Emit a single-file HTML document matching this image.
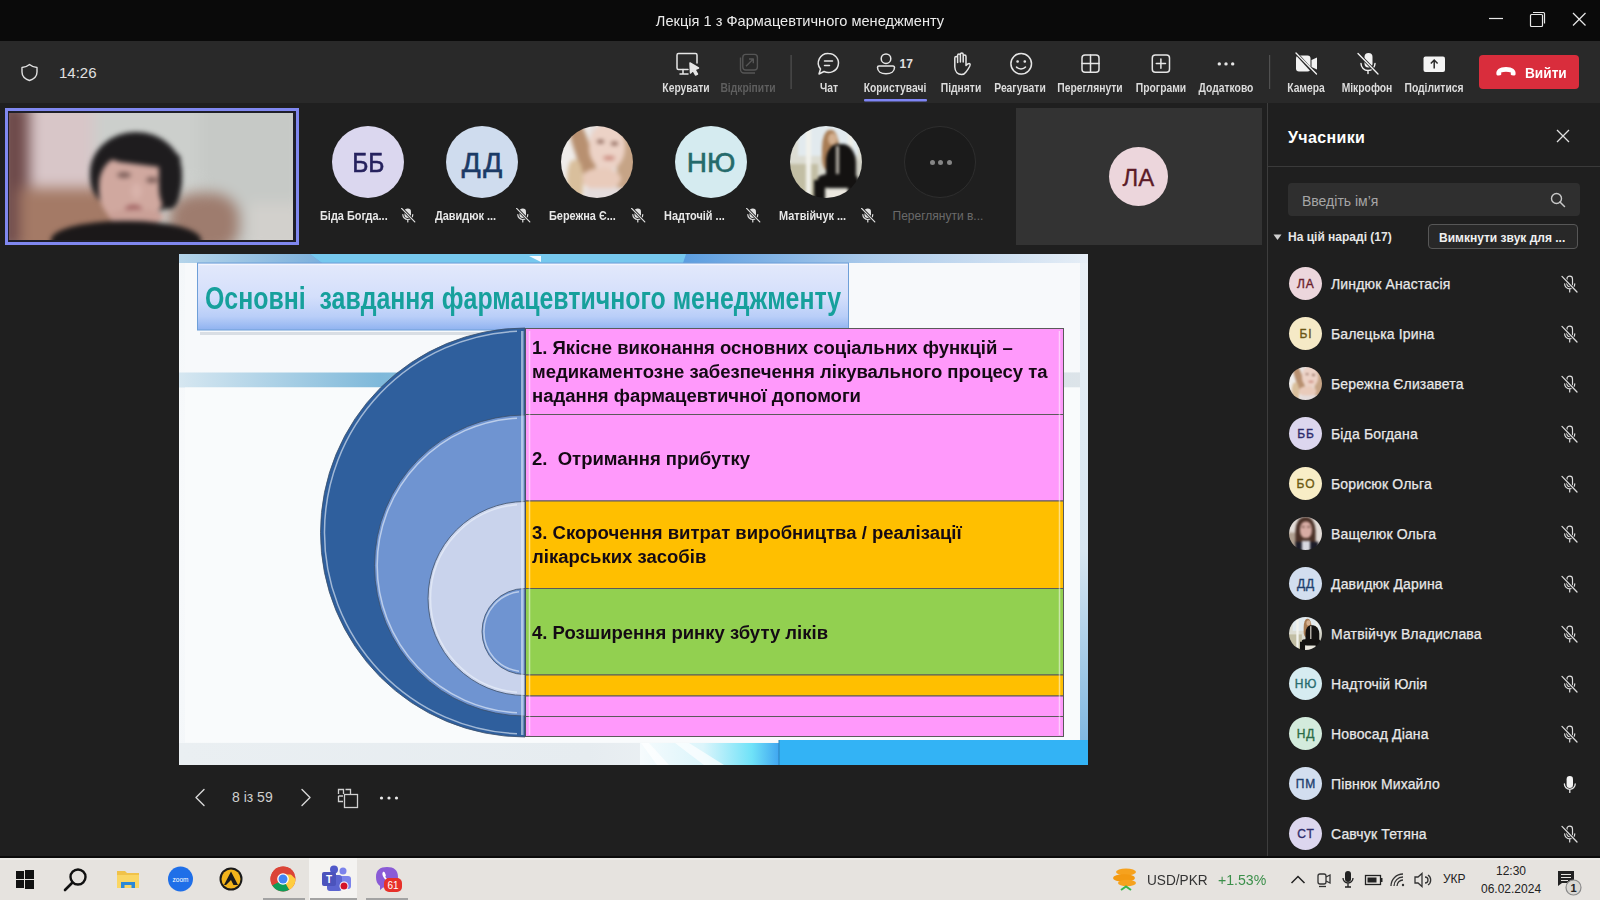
<!DOCTYPE html>
<html><head><meta charset="utf-8">
<style>
*{margin:0;padding:0;box-sizing:border-box}
html,body{width:1600px;height:900px;overflow:hidden;background:#1f1f1f;font-family:"Liberation Sans",sans-serif}
.a{position:absolute}
#title{left:0;top:0;width:1600px;height:41px;background:#0a0a0a}
#ttl{left:0;width:1600px;top:12px;text-align:center;color:#ececec;font-size:15px;transform:scaleX(0.973)}
#tb{left:0;top:41px;width:1600px;height:62px;background:#292929}
.lbl{color:#dcdcdc;font-size:12px;font-weight:bold;top:81px;text-align:center;white-space:nowrap;transform:scaleX(0.86)}
.dis{color:#5e5e5e}
.sep{background:#4a4a4a;width:1px}
svg{position:absolute;overflow:visible}
#slide{left:179px;top:254px;width:909px;height:511px;background:#f4f7fa;overflow:hidden}
#panel{left:1267px;top:103px;width:333px;height:755px;background:#1f1f1f;border-left:1px solid #3d3d3d}
.av{border-radius:50%;display:flex;align-items:center;justify-content:center;font-size:28px;font-weight:normal;-webkit-text-stroke:0.6px currentColor}
.nm{color:#e8e8e8;font-size:12px;font-weight:bold;white-space:nowrap;transform:scaleX(0.91);transform-origin:0 0}
.rt{color:#140a14;font-size:18px;font-weight:bold;line-height:24px;white-space:nowrap;transform-origin:0 0;transform:scaleX(1.028)}
.pav{width:33px;height:33px;font-size:12px;letter-spacing:0.9px;text-indent:0.9px;-webkit-text-stroke:0.35px currentColor}
.pn{color:#e8e8e8;font-size:14px;white-space:nowrap;letter-spacing:0.15px;margin-top:1.5px;-webkit-text-stroke:0.25px #e8e8e8}
#taskbar{left:0;top:858px;width:1600px;height:42px;background:#e6e3df}
</style></head><body>
<svg width="0" height="0" style="position:absolute">
 <symbol id="pmute" viewBox="0 0 18 18">
  <g fill="none" stroke="#dcdcdc" stroke-width="1.2" stroke-linecap="round">
   <rect x="5.9" y="1.2" width="5.6" height="10.4" rx="2.8"/>
   <path d="M3.6 8.8 A5.1 5.1 0 0 0 13.8 8.8 M8.7 13.9 V17"/>
  </g>
  <path d="M0.8 1.2 L16.2 17.2" stroke="#1f1f1f" stroke-width="3"/>
  <path d="M1 1.4 L16 17" stroke="#dcdcdc" stroke-width="1.3" stroke-linecap="round"/>
 </symbol>
 <symbol id="pmic" viewBox="0 0 18 18">
  <rect x="5.6" y="1" width="6.4" height="12" rx="3.2" fill="#f4f4f4"/>
  <path d="M3.4 9 A5.4 5.4 0 0 0 14.2 9 M8.8 14.6 V17.5" fill="none" stroke="#e8e8e8" stroke-width="1.3" stroke-linecap="round"/>
 </symbol>
 <symbol id="smute" viewBox="0 0 15 15">
  <rect x="3.5" y="0.5" width="6.5" height="9.5" rx="3.2" fill="#e0e0e0"/>
  <path d="M1.8 6.5 A5 5 0 0 0 11.8 6.5 M6.8 11.5 V14" fill="none" stroke="#e0e0e0" stroke-width="1.2" stroke-linecap="round"/>
  <path d="M0.3 0 L14 14" stroke="#1f1f1f" stroke-width="2.8"/>
  <path d="M0.6 0.4 L13.8 13.9" stroke="#e0e0e0" stroke-width="1.2" stroke-linecap="round"/>
 </symbol>
</svg>
<div id="title" class="a"></div>
<div id="ttl" class="a">Лекція 1 з Фармацевтичного менеджменту</div>
<div id="tb" class="a"></div>
<!-- window controls -->
<svg style="left:0;top:0" width="1600" height="41">
 <g stroke="#e8e8e8" stroke-width="1.2" fill="none">
  <line x1="1489" y1="18.5" x2="1503" y2="18.5"/>
  <rect x="1530.5" y="14.5" width="12" height="12" rx="1"/>
  <path d="M1533 12.5 H1543.5 a1 1 0 0 1 1 1 V23.5"/>
  <line x1="1573" y1="13" x2="1585.5" y2="25.5"/>
  <line x1="1585.5" y1="13" x2="1573" y2="25.5"/>
 </g>
</svg>
<!-- left toolbar -->
<svg style="left:0;top:41px" width="1600" height="62">
 <g stroke="#e0e0e0" stroke-width="1.4" fill="none" stroke-linejoin="round" stroke-linecap="round">
  <!-- shield -->
  <path d="M29.5 23.5 C26.5 26 24 26.5 22 26.5 V31 C22 35.5 25 38 29.5 39.5 C34 38 37 35.5 37 31 V26.5 C35 26.5 32.5 26 29.5 23.5 Z"/>
 </g>
 <g stroke="#e6e6e6" stroke-width="1.5" fill="none" stroke-linejoin="round" stroke-linecap="round">
  <!-- Керувати: monitor + cursor -->
  <path d="M688 28.5 H678.5 a1.5 1.5 0 0 1 -1.5 -1.5 V14 a1.5 1.5 0 0 1 1.5 -1.5 H695.5 a1.5 1.5 0 0 1 1.5 1.5 V22"/>
  <path d="M683 28.5 V32.5 M680 33 H688"/>
  <path d="M690 22 L698.5 27 L695 28.5 L697.5 33 L695.5 34 L693 29.5 L690.5 32 Z" fill="#e6e6e6"/>
  <!-- Чат -->
  <path d="M828.5 12.5 a10 9.5 0 1 1 -4.5 18 L819 33 L820.5 28 a9.5 9.5 0 0 1 8 -15.5 Z"/>
  <path d="M824.5 20 H832.5 M824.5 24.5 H829.5"/>
  <!-- person -->
  <circle cx="886" cy="17.7" r="4.8"/>
  <path d="M877.5 26.5 a1.5 1.5 0 0 1 1.5 -1.5 H893 a1.5 1.5 0 0 1 1.5 1.5 C894.5 30.5 891 32.8 886 32.8 C881 32.8 877.5 30.5 877.5 26.5 Z"/>
  <!-- hand -->
  <path transform="translate(1.5,0)" d="M964.5 31 C967.5 27 969.5 24.5 968.5 23 C967.5 22 966 23 964.5 24.5 V15.5 a1.4 1.4 0 0 0 -2.8 0 V21 V13.5 a1.4 1.4 0 0 0 -2.8 0 V21 V14.5 a1.4 1.4 0 0 0 -2.8 0 V21.5 V17 a1.4 1.4 0 0 0 -2.8 0 V26 C953.5 31 956.5 33.5 960 33.5 C962 33.5 963.5 32.5 964.5 31 Z"/>
  <!-- smiley -->
  <circle cx="1021.2" cy="22.7" r="10.3"/>
  <path d="M1016.5 26 C1018.5 28.5 1023.5 28.5 1025.5 26"/>
  <circle cx="1017.6" cy="20.5" r="0.6" fill="#e6e6e6"/><circle cx="1024.8" cy="20.5" r="0.6" fill="#e6e6e6"/>
  <!-- grid -->
  <rect x="1082" y="14" width="17" height="17.2" rx="3"/>
  <path d="M1090.5 14 V31.2 M1082 22.6 H1099"/>
  <!-- apps plus -->
  <rect x="1152.3" y="14" width="17.2" height="17.2" rx="3"/>
  <path d="M1160.9 18 V27.2 M1156.3 22.6 H1165.5"/>
 </g>
 <g fill="#e6e6e6">
  <circle cx="1219.3" cy="22.9" r="1.7"/><circle cx="1226" cy="22.9" r="1.7"/><circle cx="1232.7" cy="22.9" r="1.7"/>
 </g>
 <!-- unpin disabled -->
 <g stroke="#555" stroke-width="1.4" fill="none" stroke-linejoin="round">
  <rect x="742.8" y="13.4" width="14.6" height="15.6" rx="3"/>
  <path d="M740.5 16.5 V28.5 a3.5 3.5 0 0 0 3.5 3.5 H755"/>
  <path d="M746 25.3 L753.3 18 M749 18 H753.3 V22.3"/>
 </g>
 <!-- separators -->
 <rect x="790.5" y="14" width="1.2" height="34" fill="#505050"/>
 <rect x="1269" y="14" width="1.2" height="34" fill="#505050"/>
 <!-- underline -->
 <rect x="864" y="58" width="63" height="2.5" rx="1" fill="#7f85f5"/>
 <!-- camera off -->
 <rect x="1296" y="14.5" width="14.5" height="16" rx="3" fill="#f2f2f2"/>
 <path d="M1311.5 19 L1317 16.5 V28.5 L1311.5 26 Z" fill="#f2f2f2"/>
 <path d="M1295 11 L1316 34" stroke="#292929" stroke-width="3.2"/>
 <path d="M1296 12 L1316.5 33" stroke="#f2f2f2" stroke-width="1.3" stroke-linecap="round"/>
 <!-- mic off -->
 <rect x="1364.5" y="12" width="8" height="14.5" rx="4" fill="#f2f2f2"/>
 <path d="M1361 22.5 a7 7 0 0 0 14 0 M1368 29.5 V32.5" stroke="#f2f2f2" stroke-width="1.4" fill="none" stroke-linecap="round"/>
 <path d="M1357 11.5 L1379 34" stroke="#292929" stroke-width="3.2"/>
 <path d="M1358 12.5 L1378 33" stroke="#f2f2f2" stroke-width="1.3" stroke-linecap="round"/>
 <!-- share -->
 <rect x="1423.5" y="15.5" width="21.5" height="15.5" rx="2" fill="#f4f4f4"/>
 <path d="M1434.2 27.5 V19.5 M1430.8 22.5 L1434.2 19 L1437.6 22.5" stroke="#292929" stroke-width="1.5" fill="none"/>
 <!-- leave button -->
 <rect x="1479" y="14" width="100" height="34" rx="4" fill="#d92d3c"/>
 <path d="M1496.5 33.5 C1495.5 29 1499.5 26 1506 26 C1512.5 26 1516.5 29 1515.5 33.5 C1515.3 34.3 1514.5 34.6 1513.5 34.5 L1511.8 34.3 C1511 34.2 1510.6 33.6 1510.7 32.8 L1510.9 31.6 C1508 30.6 1504 30.6 1501.1 31.6 L1501.3 32.8 C1501.4 33.6 1501 34.2 1500.2 34.3 L1498.5 34.5 C1497.5 34.6 1496.7 34.3 1496.5 33.5 Z" fill="#fff"/>
</svg>
<div class="a" style="left:59px;top:64px;color:#e0e0e0;font-size:15px">14:26</div>
<div class="a" style="left:899.5px;top:56.5px;color:#e0e0e0;font-size:12px;font-weight:bold">17</div>
<div class="a" style="left:1525px;top:64px;color:#fff;font-size:15px;font-weight:bold;transform:scaleX(0.91);transform-origin:0 0">Вийти</div>
<div class="a lbl" style="left:646px;width:80px">Керувати</div>
<div class="a lbl dis" style="left:708px;width:80px">Відкріпити</div>
<div class="a lbl" style="left:789px;width:80px">Чат</div>
<div class="a lbl" style="left:855px;width:80px">Користувачі</div>
<div class="a lbl" style="left:921px;width:80px">Підняти</div>
<div class="a lbl" style="left:980px;width:80px">Реагувати</div>
<div class="a lbl" style="left:1050px;width:80px">Переглянути</div>
<div class="a lbl" style="left:1121px;width:80px">Програми</div>
<div class="a lbl" style="left:1186px;width:80px">Додатково</div>
<div class="a lbl" style="left:1266px;width:80px">Камера</div>
<div class="a lbl" style="left:1327px;width:80px">Мікрофон</div>
<div class="a lbl" style="left:1394px;width:80px">Поділитися</div>

<!-- self video -->
<div class="a" style="left:5px;top:108px;width:294px;height:137px;border:3px solid #8088f0;background:#1f1f2a"></div>
<div class="a" style="left:9px;top:113px;width:284px;height:127px;overflow:hidden;background:#cfd2cf">
 <div class="a" style="left:-10px;top:-10px;width:304px;height:147px;filter:blur(7px)">
  <div class="a" style="left:0;top:0;width:40px;height:147px;background:#6e4a4a"></div>
  <div class="a" style="left:30px;top:0;width:70px;height:90px;background:#d8c6c8"></div>
  <div class="a" style="left:20px;top:85px;width:110px;height:70px;background:#a47a66"></div>
  <div class="a" style="left:95px;top:0;width:110px;height:80px;background:#cccfcc"></div>
  <div class="a" style="left:200px;top:0;width:104px;height:147px;background:#c6c9c6"></div>
  <div class="a" style="left:170px;top:90px;width:70px;height:60px;background:#9e7c6e;border-radius:40%"></div>
  <div class="a" style="left:250px;top:100px;width:60px;height:50px;background:#d2d0cc"></div>
 </div>
 <div class="a" style="left:0;top:0;width:284px;height:127px;filter:blur(2.4px)">
  <div class="a" style="left:81px;top:19px;width:92px;height:82px;border-radius:50% 50% 40% 45%;background:#1e1c1e"></div>
  <div class="a" style="left:90px;top:42px;width:66px;height:70px;border-radius:42% 42% 48% 48%;background:#d0a89f"></div>
  <div class="a" style="left:98px;top:30px;width:74px;height:22px;border-radius:50% 60% 30% 30%;background:#1e1c1e;transform:rotate(7deg)"></div>
  <div class="a" style="left:150px;top:44px;width:22px;height:52px;border-radius:20% 60% 60% 50%;background:#1e1c1e"></div>
  <div class="a" style="left:108px;top:59px;width:14px;height:6px;border-radius:50%;background:#7d5f5a"></div>
  <div class="a" style="left:137px;top:64px;width:12px;height:6px;border-radius:50%;background:#7d5f5a"></div>
  <div class="a" style="left:122px;top:70px;width:11px;height:16px;border-radius:50%;background:#d8b2aa"></div>
  <div class="a" style="left:116px;top:92px;width:17px;height:8px;border-radius:50%;background:#9c5a5c"></div>
  <div class="a" style="left:100px;top:96px;width:55px;height:16px;border-radius:50%;background:#caa097"></div>
  <div class="a" style="left:42px;top:108px;width:150px;height:40px;border-radius:48% 48% 0 0;background:#1b1819"></div>
 </div>
</div>

<!-- avatars -->
<div class="a av" style="left:332px;top:126px;width:72px;height:72px;background:#dbd7ef;color:#26225e"><span style="display:inline-block;transform:scaleX(0.88);margin-top:1px">ББ</span></div>
<div class="a av" style="left:446px;top:126px;width:72px;height:72px;background:#cfdcee;color:#1b3a66"><span style="display:inline-block;letter-spacing:2.5px;margin-left:2.5px;margin-top:1px">ДД</span></div>
<div class="a" style="left:561px;top:126px;width:72px;height:72px;border-radius:50%;overflow:hidden;isolation:isolate"><div class="a" style="left:-6px;top:-6px;width:84px;height:84px;filter:blur(2px)">
<div class="a" style="left:0;top:0;width:84px;height:84px;background:#e6e0de"></div>
<div class="a" style="left:0;top:0;width:34px;height:84px;background:#efecea"></div>
<div class="a" style="left:20px;top:-4px;width:16px;height:70px;background:#b89070;border-radius:40%;transform:rotate(-18deg)"></div>
<div class="a" style="left:62px;top:0;width:22px;height:84px;background:#c6a486"></div>
<div class="a" style="left:34px;top:4px;width:36px;height:46px;border-radius:48%;background:#ecd2c6"></div>
<div class="a" style="left:42px;top:20px;width:7px;height:3px;background:#6a4034;border-radius:50%"></div>
<div class="a" style="left:56px;top:22px;width:7px;height:3px;background:#6a4034;border-radius:50%"></div>
<div class="a" style="left:48px;top:36px;width:12px;height:4px;background:#c88478;border-radius:50%"></div>
<div class="a" style="left:26px;top:48px;width:40px;height:22px;border-radius:50%;background:#e9cbbb"></div>
<div class="a" style="left:12px;top:40px;width:16px;height:44px;background:#d9bf9c;border-radius:40%"></div>
<div class="a" style="left:30px;top:68px;width:40px;height:16px;background:#e4dcdc"></div>
</div></div>
<div class="a av" style="left:675px;top:126px;width:72px;height:72px;background:#d5ebf0;color:#256a6b"><span style="display:inline-block;margin-top:1px">НЮ</span></div>
<div class="a" style="left:790px;top:126px;width:72px;height:72px;border-radius:50%;overflow:hidden;isolation:isolate"><div class="a" style="left:-6px;top:-6px;width:84px;height:84px;filter:blur(1.6px)">
<div class="a" style="left:0;top:0;width:84px;height:84px;background:#dcdcd2"></div>
<div class="a" style="left:14px;top:0;width:60px;height:36px;background:#e2eaee"></div>
<div class="a" style="left:0;top:44px;width:34px;height:40px;background:#c2bea4"></div>
<div class="a" style="left:62px;top:40px;width:22px;height:44px;background:#cfcfc4"></div>
<div class="a" style="left:22px;top:6px;width:5px;height:78px;background:#f2f2ec"></div>
<div class="a" style="left:64px;top:6px;width:5px;height:60px;background:#eeeee8"></div>
<div class="a" style="left:38px;top:10px;width:17px;height:40px;background:#a87c54;border-radius:45% 45% 30% 30%"></div>
<div class="a" style="left:44px;top:13px;width:9px;height:12px;background:#d4b090;border-radius:50%"></div>
<div class="a" style="left:42px;top:24px;width:30px;height:42px;background:#141211;border-radius:40% 45% 20% 20%"></div>
<div class="a" style="left:34px;top:54px;width:40px;height:14px;background:#141211;border-radius:30%"></div>
<div class="a" style="left:30px;top:60px;width:11px;height:24px;background:#141211"></div>
<div class="a" style="left:64px;top:60px;width:11px;height:24px;background:#141211"></div>
<div class="a" style="left:42px;top:70px;width:22px;height:14px;background:#ece8e0"></div>
<div class="a" style="left:52px;top:26px;width:2.5px;height:28px;background:#bdb8ae"></div>
</div></div>
<div class="a" style="left:904px;top:126px;width:72px;height:72px;border-radius:50%;background:#1b1b1b;border:1px solid #2e2e2e"></div>
<svg style="left:0;top:0" width="1" height="1"></svg>
<div class="a" style="left:929.5px;top:159.5px;width:5px;height:5px;border-radius:50%;background:#858585"></div>
<div class="a" style="left:938px;top:159.5px;width:5px;height:5px;border-radius:50%;background:#858585"></div>
<div class="a" style="left:946.5px;top:159.5px;width:5px;height:5px;border-radius:50%;background:#858585"></div>

<div class="a nm" style="left:320px;top:209px">Біда Богда...</div>
<div class="a nm" style="left:435px;top:209px">Давидюк ...</div>
<div class="a nm" style="left:549px;top:209px">Бережна Є...</div>
<div class="a nm" style="left:664px;top:209px">Надточій ...</div>
<div class="a nm" style="left:779px;top:209px">Матвійчук ...</div>
<div class="a nm" style="left:892.5px;top:209px;color:#6a6a6a;font-weight:normal;transform:none">Переглянути в...</div>
<svg style="left:401px;top:208px" width="15" height="15"><use href="#smute"/></svg><svg style="left:516px;top:208px" width="15" height="15"><use href="#smute"/></svg><svg style="left:631px;top:208px" width="15" height="15"><use href="#smute"/></svg><svg style="left:746px;top:208px" width="15" height="15"><use href="#smute"/></svg><svg style="left:861px;top:208px" width="15" height="15"><use href="#smute"/></svg>

<!-- ЛА tile -->
<div class="a" style="left:1016px;top:108px;width:246px;height:137px;background:#333"></div>
<div class="a av" style="left:1109px;top:147px;width:59px;height:59px;background:#ecd6dc;color:#5c1c28;font-size:24px;font-weight:normal;padding-top:2px;-webkit-text-stroke:0.3px #5c1c28">ЛА</div>

<div id="panel" class="a"></div>
<div class="a" style="left:1288px;top:128.5px;color:#fff;font-size:16px;font-weight:bold;letter-spacing:0.35px">Учасники</div>
<svg style="left:1556px;top:129px" width="14" height="14"><path d="M1 1 L13 13 M13 1 L1 13" stroke="#e0e0e0" stroke-width="1.3"/></svg>
<div class="a" style="left:1268px;top:166px;width:332px;height:1px;background:#3a3a3a"></div>
<div class="a" style="left:1288px;top:183px;width:292px;height:33px;border-radius:4px;background:#2f2f2f"></div>
<div class="a" style="left:1302px;top:193px;color:#a6a6a6;font-size:14px">Введіть ім’я</div>
<svg style="left:1550px;top:192px" width="16" height="16"><circle cx="6.5" cy="6.5" r="5" fill="none" stroke="#c8c8c8" stroke-width="1.4"/><path d="M10 10 L14.5 14.5" stroke="#c8c8c8" stroke-width="1.5" stroke-linecap="round"/></svg>
<svg style="left:1273px;top:234px" width="10" height="8"><path d="M0.5 0.5 H8.5 L4.5 6 Z" fill="#cfcfcf"/></svg>
<div class="a" style="left:1288px;top:230px;color:#e6e6e6;font-size:12px;font-weight:bold">На цій нараді (17)</div>
<div class="a" style="left:1428px;top:224px;width:150px;height:25px;border:1px solid #575757;border-radius:4px;background:#282828"></div>
<div class="a" style="left:1439px;top:231px;color:#f0f0f0;font-size:12px;font-weight:bold">Вимкнути звук для ...</div>
<div class="a av pav" style="left:1289px;top:267px;background:#ecd6dc;color:#6a1f2e">ЛА</div>
<div class="a pn" style="left:1331px;top:274px">Линдюк Анастасія</div>
<svg style="left:1561px;top:274.5px" width="18" height="18"><use href="#pmute"/></svg>
<div class="a av pav" style="left:1289px;top:317px;background:#f5e9c6;color:#6b5516">БІ</div>
<div class="a pn" style="left:1331px;top:324px">Балецька Ірина</div>
<svg style="left:1561px;top:324.5px" width="18" height="18"><use href="#pmute"/></svg>
<div class="a" style="left:1289px;top:367px;width:33px;height:33px;border-radius:50%;overflow:hidden;isolation:isolate"><div class="a" style="left:0;top:0;width:72px;height:72px;transform:scale(0.4583);transform-origin:0 0"><div class="a" style="left:-6px;top:-6px;width:84px;height:84px;filter:blur(2px)">
<div class="a" style="left:0;top:0;width:84px;height:84px;background:#e6e0de"></div>
<div class="a" style="left:0;top:0;width:34px;height:84px;background:#efecea"></div>
<div class="a" style="left:20px;top:-4px;width:16px;height:70px;background:#b89070;border-radius:40%;transform:rotate(-18deg)"></div>
<div class="a" style="left:62px;top:0;width:22px;height:84px;background:#c6a486"></div>
<div class="a" style="left:34px;top:4px;width:36px;height:46px;border-radius:48%;background:#ecd2c6"></div>
<div class="a" style="left:42px;top:20px;width:7px;height:3px;background:#6a4034;border-radius:50%"></div>
<div class="a" style="left:56px;top:22px;width:7px;height:3px;background:#6a4034;border-radius:50%"></div>
<div class="a" style="left:48px;top:36px;width:12px;height:4px;background:#c88478;border-radius:50%"></div>
<div class="a" style="left:26px;top:48px;width:40px;height:22px;border-radius:50%;background:#e9cbbb"></div>
<div class="a" style="left:12px;top:40px;width:16px;height:44px;background:#d9bf9c;border-radius:40%"></div>
<div class="a" style="left:30px;top:68px;width:40px;height:16px;background:#e4dcdc"></div>
</div></div></div>
<div class="a pn" style="left:1331px;top:374px">Бережна Єлизавета</div>
<svg style="left:1561px;top:374.5px" width="18" height="18"><use href="#pmute"/></svg>
<div class="a av pav" style="left:1289px;top:417px;background:#dcd6ee;color:#2e2c6b">ББ</div>
<div class="a pn" style="left:1331px;top:424px">Біда Богдана</div>
<svg style="left:1561px;top:424.5px" width="18" height="18"><use href="#pmute"/></svg>
<div class="a av pav" style="left:1289px;top:467px;background:#f8edc6;color:#6d5a12">БО</div>
<div class="a pn" style="left:1331px;top:474px">Борисюк Ольга</div>
<svg style="left:1561px;top:474.5px" width="18" height="18"><use href="#pmute"/></svg>
<div class="a" style="left:1289px;top:517px;width:33px;height:33px;border-radius:50%;overflow:hidden;isolation:isolate"><div class="a" style="left:0;top:0;width:72px;height:72px;transform:scale(0.4583);transform-origin:0 0"><div class="a" style="left:-6px;top:-6px;width:84px;height:84px;filter:blur(2.5px)">
<div class="a" style="left:0;top:0;width:84px;height:84px;background:#e4ddd8"></div>
<div class="a" style="left:0;top:40px;width:28px;height:44px;background:#b0a090"></div>
<div class="a" style="left:20px;top:6px;width:44px;height:66px;border-radius:45% 45% 20% 20%;background:#4a3026"></div>
<div class="a" style="left:30px;top:16px;width:26px;height:36px;border-radius:45%;background:#d8aca4"></div>
<div class="a" style="left:34px;top:26px;width:6px;height:3px;background:#6a4a40"></div>
<div class="a" style="left:46px;top:26px;width:6px;height:3px;background:#6a4a40"></div>
<div class="a" style="left:20px;top:60px;width:50px;height:30px;background:#1c1c28"></div>
<div class="a" style="left:34px;top:58px;width:18px;height:26px;background:#d8d8e0"></div>
</div></div></div>
<div class="a pn" style="left:1331px;top:524px">Ващелюк Ольга</div>
<svg style="left:1561px;top:524.5px" width="18" height="18"><use href="#pmute"/></svg>
<div class="a av pav" style="left:1289px;top:567px;background:#d2deef;color:#1f3f6e">ДД</div>
<div class="a pn" style="left:1331px;top:574px">Давидюк Дарина</div>
<svg style="left:1561px;top:574.5px" width="18" height="18"><use href="#pmute"/></svg>
<div class="a" style="left:1289px;top:617px;width:33px;height:33px;border-radius:50%;overflow:hidden;isolation:isolate"><div class="a" style="left:0;top:0;width:72px;height:72px;transform:scale(0.4583);transform-origin:0 0"><div class="a" style="left:-6px;top:-6px;width:84px;height:84px;filter:blur(1.6px)">
<div class="a" style="left:0;top:0;width:84px;height:84px;background:#dcdcd2"></div>
<div class="a" style="left:14px;top:0;width:60px;height:36px;background:#e2eaee"></div>
<div class="a" style="left:0;top:44px;width:34px;height:40px;background:#c2bea4"></div>
<div class="a" style="left:62px;top:40px;width:22px;height:44px;background:#cfcfc4"></div>
<div class="a" style="left:22px;top:6px;width:5px;height:78px;background:#f2f2ec"></div>
<div class="a" style="left:64px;top:6px;width:5px;height:60px;background:#eeeee8"></div>
<div class="a" style="left:38px;top:10px;width:17px;height:40px;background:#a87c54;border-radius:45% 45% 30% 30%"></div>
<div class="a" style="left:44px;top:13px;width:9px;height:12px;background:#d4b090;border-radius:50%"></div>
<div class="a" style="left:42px;top:24px;width:30px;height:42px;background:#141211;border-radius:40% 45% 20% 20%"></div>
<div class="a" style="left:34px;top:54px;width:40px;height:14px;background:#141211;border-radius:30%"></div>
<div class="a" style="left:30px;top:60px;width:11px;height:24px;background:#141211"></div>
<div class="a" style="left:64px;top:60px;width:11px;height:24px;background:#141211"></div>
<div class="a" style="left:42px;top:70px;width:22px;height:14px;background:#ece8e0"></div>
<div class="a" style="left:52px;top:26px;width:2.5px;height:28px;background:#bdb8ae"></div>
</div></div></div>
<div class="a pn" style="left:1331px;top:624px">Матвійчук Владислава</div>
<svg style="left:1561px;top:624.5px" width="18" height="18"><use href="#pmute"/></svg>
<div class="a av pav" style="left:1289px;top:667px;background:#d6ecf1;color:#286b6d">НЮ</div>
<div class="a pn" style="left:1331px;top:674px">Надточій Юлія</div>
<svg style="left:1561px;top:674.5px" width="18" height="18"><use href="#pmute"/></svg>
<div class="a av pav" style="left:1289px;top:717px;background:#d3ebdc;color:#2b6b45">НД</div>
<div class="a pn" style="left:1331px;top:724px">Новосад Діана</div>
<svg style="left:1561px;top:724.5px" width="18" height="18"><use href="#pmute"/></svg>
<div class="a av pav" style="left:1289px;top:767px;background:#d2deef;color:#1f3f6e">ПМ</div>
<div class="a pn" style="left:1331px;top:774px">Півнюк Михайло</div>
<svg style="left:1561px;top:774.5px" width="18" height="18"><use href="#pmic"/></svg>
<div class="a av pav" style="left:1289px;top:817px;background:#dcd6ee;color:#2e2c6b">СТ</div>
<div class="a pn" style="left:1331px;top:824px">Савчук Тетяна</div>
<svg style="left:1561px;top:824.5px" width="18" height="18"><use href="#pmute"/></svg>

<div id="slide" class="a">
 <svg style="left:0;top:0" width="909" height="511">
  <defs>
   <linearGradient id="tg" x1="0" y1="0" x2="0" y2="1">
    <stop offset="0" stop-color="#e3e9fb"/><stop offset="0.5" stop-color="#d4dffb"/><stop offset="0.8" stop-color="#b9cef8"/><stop offset="1" stop-color="#8fb2f0"/>
   </linearGradient>
   <linearGradient id="band" x1="0" y1="0" x2="1" y2="0">
    <stop offset="0" stop-color="#d6e7f1"/><stop offset="0.22" stop-color="#7fb9da"/><stop offset="0.6" stop-color="#a6cfe4"/><stop offset="0.9" stop-color="#d6e2ea"/><stop offset="1" stop-color="#dde4e9"/>
   </linearGradient>
   <linearGradient id="topL" x1="0" y1="0" x2="1" y2="0">
    <stop offset="0" stop-color="#b4d4ea"/><stop offset="1" stop-color="#7cb0dc"/>
   </linearGradient>
   <linearGradient id="topR" gradientUnits="userSpaceOnUse" x1="505" y1="0" x2="909" y2="0">
    <stop offset="0" stop-color="#5c9ee0"/><stop offset="0.45" stop-color="#a9c9ea"/><stop offset="1" stop-color="#e6eef6"/>
   </linearGradient>
   <linearGradient id="cyan" x1="0" y1="0" x2="1" y2="0">
    <stop offset="0" stop-color="#f6fbfd"/><stop offset="0.45" stop-color="#dcf5fb"/><stop offset="0.8" stop-color="#6fe2f8"/><stop offset="1" stop-color="#3ea4f0"/>
   </linearGradient>
   <linearGradient id="botL" x1="0" y1="0" x2="1" y2="0">
    <stop offset="0" stop-color="#eaeff2"/><stop offset="0.45" stop-color="#e6ecf0"/><stop offset="0.7" stop-color="#f4f8fa"/><stop offset="1" stop-color="#f8fafb"/>
   </linearGradient>
   <linearGradient id="rside" x1="0" y1="0" x2="0" y2="1">
    <stop offset="0" stop-color="#e9f0f6"/><stop offset="0.6" stop-color="#d7e6f1"/><stop offset="1" stop-color="#7fb7e0"/>
   </linearGradient>
   <radialGradient id="bgrad" cx="0.3" cy="0.5" r="0.8">
    <stop offset="0" stop-color="#fbfcfd"/><stop offset="1" stop-color="#f1f5f8"/>
   </radialGradient>
  </defs>
  <rect x="0" y="0" width="909" height="511" fill="url(#bgrad)"/>
  <!-- top band -->
  <rect x="0" y="0" width="909" height="9" fill="url(#topR)"/>
  <path d="M0 0 H 131 L 143 9 H0 Z" fill="url(#topL)"/>
  <path d="M131 0 H507 L 504 9 H143 Z" fill="#76c8ee"/>
  <path d="M350 2 L 362 2 L 362 8 Z" fill="#f4fbff"/>
  <!-- inner panels -->
  <rect x="6" y="9" width="895" height="109" fill="#f7f9fb"/>
  <rect x="0" y="118.5" width="909" height="15" fill="url(#band)"/>
  <rect x="6" y="133.5" width="895" height="355" fill="#f9fbfc"/>
  <rect x="901" y="9" width="8" height="480" fill="url(#rside)"/>
  <rect x="0" y="489" width="909" height="22" fill="url(#botL)"/>
  <rect x="461" y="489" width="140" height="22" fill="url(#cyan)"/>
  <path d="M470 489 L 490 511 H 478 L 462 489 Z M510 489 L 545 511 H 525 L 496 489 Z" fill="#ffffff" opacity=".7"/>
  <rect x="600" y="486" width="309" height="25" fill="#33b3f5"/>
  <rect x="599.5" y="486" width="1" height="25" fill="#2a80b8"/>
  <!-- title box -->
  <rect x="21" y="78" width="650" height="3" fill="#c4ccd6" opacity=".6"/>
  <rect x="18.5" y="9" width="651" height="67" fill="url(#tg)" stroke="#6e9fd8" stroke-width="1"/>
  <rect x="19.5" y="10" width="649" height="1.2" fill="#f6f8ff" opacity=".8"/>
  <!-- table -->
  <g stroke="#5a5a5a" stroke-width="1">
   <rect x="346.5" y="74.5" width="538" height="86" fill="#ff99fb"/>
   <rect x="346.5" y="160.5" width="538" height="86.5" fill="#ff99fb"/>
   <rect x="346.5" y="247" width="538" height="87.5" fill="#ffbf00"/>
   <rect x="346.5" y="334.5" width="538" height="86.5" fill="#92d050"/>
   <rect x="346.5" y="421" width="538" height="21" fill="#ffbf00"/>
   <rect x="346.5" y="442" width="538" height="20.5" fill="#ff99fb"/>
   <rect x="346.5" y="462.5" width="538" height="20" fill="#ff99fb"/>
  </g>
  <g opacity=".5" stroke="#fff" stroke-width="1.5">
   <line x1="350.5" y1="77" x2="350.5" y2="481"/>
   <line x1="880.5" y1="77" x2="880.5" y2="481"/>
  </g>
  <!-- half circles -->
  <g stroke="#3c4f68" stroke-width="0.8">
   <path d="M346 74 A204.5 204.5 0 0 0 346 483 Z" fill="#2f5f9d"/>
   <path d="M346 161 A150.5 150.5 0 0 0 346 462 Z" fill="#6f94d1"/>
   <path d="M346 247.5 A97 97 0 0 0 346 441.5 Z" fill="#c9d3ec"/>
   <path d="M346 334.5 A43 43 0 0 0 346 420.5 Z" fill="#6f94d1"/>
  </g>
  <g fill="none" stroke="#eef4fc" stroke-width="1.5" opacity=".6">
   <path d="M338 77.2 A201.5 201.5 0 0 0 338 479.8"/>
   <path d="M338 164.2 A147.5 147.5 0 0 0 338 458.8"/>
   <path d="M338 250.8 A94 94 0 0 0 338 438.2"/>
   <path d="M340 337.8 A40 40 0 0 0 340 417.2"/>
  </g>
  <rect x="342" y="77" width="2.5" height="404" fill="#eaf2fb" opacity=".55"/>
 </svg>
 <div class="a st" style="left:26px;top:25.5px;color:#16a09c;font-size:31.5px;font-weight:bold;white-space:nowrap;transform-origin:0 0;transform:scaleX(0.79)">Основні&nbsp; завдання фармацевтичного менеджменту</div>
 <div class="a rt" style="left:353px;top:81.5px">1. Якісне виконання основних соціальних функцій –<br>медикаментозне забезпечення лікувального процесу та<br>надання фармацевтичної допомоги</div>
 <div class="a rt" style="left:353px;top:192.5px">2.&nbsp; Отримання прибутку</div>
 <div class="a rt" style="left:353px;top:267px">3. Скорочення витрат виробництва / реалізації<br>лікарських засобів</div>
 <div class="a rt" style="left:353px;top:366.5px">4. Розширення ринку збуту ліків</div>
</div>
</div>


<svg style="left:0;top:780px" width="420" height="36">
 <g fill="none" stroke="#d8d8d8" stroke-width="1.4" stroke-linecap="round" stroke-linejoin="round">
  <path d="M204 9.5 L196 17.5 L204 25.5"/>
  <path d="M302 9.5 L310 17.5 L302 25.5"/>
 </g>
 <g fill="none" stroke="#d0d0d0" stroke-width="1.3">
  <rect x="344.5" y="14.5" width="13" height="13"/>
  <path d="M338.5 14 V9.5 H343.5 V14 M345.5 9.5 H350.5 V14 M338.5 16 H343 M338.5 16 V21.5 H343"/>
 </g>
 <g fill="#e8e8e8"><circle cx="381.5" cy="18" r="1.6"/><circle cx="389" cy="18" r="1.6"/><circle cx="396.5" cy="18" r="1.6"/></g>
</svg>
<div class="a" style="left:232px;top:789px;color:#cfcfcf;font-size:14px">8 із 59</div>
<div class="a" style="left:0;top:855.5px;width:1600px;height:2.5px;background:#0a0a0a"></div>
<div id="taskbar" class="a"></div>
<div class="a" style="left:0;top:858px;width:1600px;height:2px;background:#ebeae6"></div>
<div class="a" style="left:309px;top:858px;width:48px;height:42px;background:#f4f3f1"></div>
<div class="a" style="left:263px;top:898px;width:42px;height:2px;background:#a3a3a3"></div>
<div class="a" style="left:310px;top:898px;width:47px;height:2px;background:#a3a3a3"></div>
<div class="a" style="left:366px;top:898px;width:42px;height:2px;background:#a3a3a3"></div>
<svg style="left:0;top:858px" width="1600" height="42">
 <!-- windows -->
 <g fill="#111"><rect x="16" y="13" width="8" height="8"/><rect x="25" y="12" width="9" height="9"/><rect x="16" y="22" width="8" height="8"/><rect x="25" y="22" width="9" height="9"/></g>
 <!-- search -->
 <circle cx="78" cy="19" r="7.5" fill="none" stroke="#111" stroke-width="2.4"/>
 <path d="M72.5 24.5 L65 32" stroke="#111" stroke-width="2.6" stroke-linecap="round"/>
 <!-- folder -->
 <path d="M117 13 H125 L127 15 H139 V30 H117 Z" fill="#f0c24a"/>
 <rect x="117" y="17" width="22" height="13" fill="#fad664"/>
 <path d="M121 30 V24 H135 V30 H131.5 V27 H124.5 V30 Z" fill="#2b88d8"/>
 <!-- zoom -->
 <circle cx="180.5" cy="21" r="12.5" fill="#1f6fe8"/>
 <text x="180.5" y="23.5" font-size="6.5" fill="#fff" text-anchor="middle" font-family="Liberation Sans">zoom</text>
 <!-- aimp -->
 <circle cx="231" cy="21" r="11.5" fill="#1a1a1a"/>
 <circle cx="231" cy="21" r="9.5" fill="#f2b41c"/>
 <path d="M231 13.5 L238 27 H233.5 L231 22 L226 27 H224 Z" fill="#1a1a1a"/>
 <!-- chrome -->
 <circle cx="283" cy="21" r="12.5" fill="#db4437"/>
 <path d="M283 21 L272.2 27.25 A12.5 12.5 0 0 0 289.25 31.83 Z" fill="#0f9d58"/>
 <path d="M283 21 L289.25 31.83 A12.5 12.5 0 0 0 295.5 21 L283 8.5 Z" fill="#ffcd40"/>
 <path d="M283 21 L283 8.5 A12.5 12.5 0 0 0 272.2 14.75 L272.2 27.25 Z" fill="#db4437"/>
 <path d="M283 8.5 A12.5 12.5 0 0 1 294.8 16.5 H283 Z" fill="#db4437"/>
 <path d="M272.2 14.75 L278 24.5 L272.2 27.25 A12.5 12.5 0 0 1 272.2 14.75 Z" fill="#db4437"/>
 <circle cx="283" cy="21" r="5.8" fill="#fff"/>
 <circle cx="283" cy="21" r="4.5" fill="#4285f4"/>
 <!-- teams -->
 <circle cx="343" cy="13" r="3.5" fill="#7b83eb"/>
 <rect x="336" y="18" width="15" height="13" rx="3" fill="#7b83eb"/>
 <circle cx="334" cy="11.5" r="4" fill="#5059c9"/>
 <rect x="327" y="17" width="15" height="16" rx="3" fill="#5b64d0"/>
 <rect x="322" y="14" width="14" height="14" rx="2" fill="#4b53bc"/>
 <text x="329" y="25" font-size="10" fill="#fff" text-anchor="middle" font-weight="bold" font-family="Liberation Sans">T</text>
 <circle cx="344" cy="28" r="4.5" fill="#fff"/>
 <circle cx="344" cy="28" r="3.5" fill="#d4132a"/>
 <!-- viber -->
 <path d="M387 9 C380 9 376 12 376 19 C376 23 377 26 380 28 V32 L383 29.5 C384 29.8 385.5 30 387 30 C394 30 398 26 398 19 C398 12 394 9 387 9 Z" fill="#8a5bd6"/>
 <path d="M383 14 C382 15 382 17 384 20 C386 23 389 24.5 391 24 C392 23.5 392 22.5 391 22 L389.5 21 C389 20.7 388.5 21 388.2 21.4 C387 21 385.8 19.8 385.3 18.5 C385.8 18.2 386 17.6 385.8 17.1 L385 15 C384.6 14 383.8 13.6 383 14 Z" fill="#fff"/>
 <rect x="384" y="20" width="18" height="14" rx="5" fill="#e7312a"/>
 <text x="393" y="31" font-size="10" fill="#fff" text-anchor="middle" font-family="Liberation Sans">61</text>
 <!-- coins -->
 <ellipse cx="1126" cy="14" rx="10" ry="3.5" fill="#f6a21e"/>
 <ellipse cx="1124" cy="20" rx="11" ry="3.8" fill="#f39a12"/>
 <ellipse cx="1127" cy="25" rx="9" ry="3.3" fill="#f6a21e"/>
 <path d="M1121 32 L1126 28.5 L1131 32" stroke="#3ab54a" stroke-width="2" fill="none"/>
 <!-- tray -->
 <path d="M1291.5 25 L1298 18.5 L1304.5 25" stroke="#222" stroke-width="1.5" fill="none"/>
 <g fill="none" stroke="#333" stroke-width="1.3">
  <rect x="1318" y="16" width="8" height="10" rx="2"/>
  <path d="M1326 19 L1330 17 V25 L1326 23"/>
  <path d="M1319 28.5 H1326"/>
 </g>
 <rect x="1345" y="13" width="6" height="11" rx="3" fill="#222"/>
 <path d="M1343 20 a5 5 0 0 0 10 0 M1348 25 V29 M1345 29 H1351" stroke="#222" stroke-width="1.3" fill="none"/>
 <rect x="1365.5" y="17.5" width="15" height="9" fill="none" stroke="#222" stroke-width="1.3"/>
 <rect x="1367.5" y="19.5" width="9" height="5" fill="#222"/>
 <rect x="1381" y="20" width="1.5" height="4" fill="#222"/>
 <g fill="none" stroke="#333" stroke-width="1.3">
  <path d="M1391 28 A12 12 0 0 1 1403 16"/><path d="M1394 28 A9 9 0 0 1 1403 19"/><path d="M1397 28 A6 6 0 0 1 1403 22"/>
 </g>
 <circle cx="1403" cy="27" r="1.2" fill="#333"/>
 <g fill="none" stroke="#333" stroke-width="1.3">
  <path d="M1415 19 H1418 L1422 15.5 V28.5 L1418 25 H1415 Z"/>
  <path d="M1425 19 a3 3 0 0 1 0 6"/><path d="M1428 17 a6 6 0 0 1 0 10"/>
 </g>
 <!-- notification -->
 <path d="M1558 13 H1574 V25 H1562 L1558 28 Z" fill="#222"/>
 <path d="M1561 16.5 H1571 M1561 19.5 H1571 M1561 22.5 H1568" stroke="#e6e4e1" stroke-width="1"/>
 <circle cx="1573.5" cy="29.5" r="7.5" fill="#d9d7d3" stroke="#8a8a8a" stroke-width="1.2"/>
 <text x="1573.5" y="33.5" font-size="11" fill="#222" text-anchor="middle" font-weight="bold" font-family="Liberation Sans">1</text>
</svg>
<div class="a" style="left:1147px;top:871px;color:#333;font-size:15px;transform:scaleX(0.91);transform-origin:0 0">USD/PKR</div>
<div class="a" style="left:1217.5px;top:871px;color:#3b8f4a;font-size:15px;transform:scaleX(0.94);transform-origin:0 0">+1.53%</div>
<div class="a" style="left:1443px;top:872px;color:#222;font-size:12px">УКР</div>
<div class="a" style="left:1481px;top:862px;width:60px;text-align:center;color:#222;font-size:12px;line-height:18px">12:30<br>06.02.2024</div>

</body></html>
